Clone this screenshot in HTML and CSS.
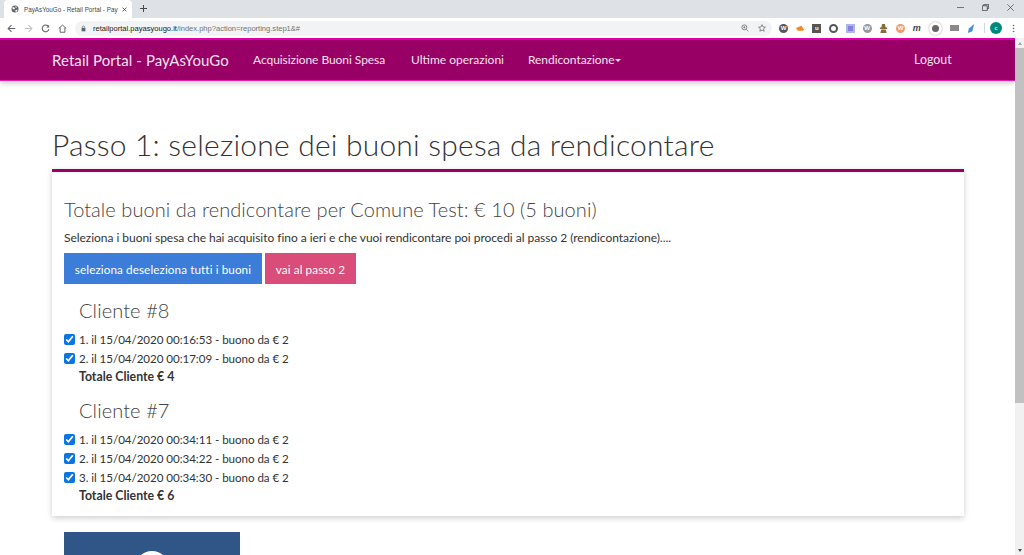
FILE: index.html
```html
<!DOCTYPE html>
<html lang="it">
<head>
<meta charset="utf-8">
<title>PayAsYouGo - Retail Portal</title>
<link rel="stylesheet" href="styles.css">
</head>
<body>
<div class="tabstrip">
  <div class="tab">
    <svg class="favicon" viewBox="0 0 16 16"><circle cx="8" cy="8" r="7" fill="#5f6368"/><path d="M3 4l4 1 1 3-3 1-2-2zM9 2l3 2-2 2-1-1zM9 10l4-1-1 4-3 1z" fill="#fff"/></svg>
    <span class="tab-title">PayAsYouGo - Retail Portal - Pay</span>
    <svg class="tab-close" viewBox="0 0 8 8"><path d="M1 1l6 6M7 1l-6 6" stroke="#3c4043" stroke-width="1.3"/></svg>
  </div>
  <svg class="new-tab" viewBox="0 0 9 9"><path d="M4.500 0v9M0 4.500h9" stroke="#45484c" stroke-width="1.300"/></svg>
  <div class="window-controls">
    <svg viewBox="0 0 10 10"><path d="M0 5h10" stroke="#444" stroke-width="1"/></svg>
    <svg viewBox="0 0 10 10"><path d="M2.500 2.500V.5h7v6h-2M.5 2.500h7v7h-7z" fill="none" stroke="#444" stroke-width="1.200"/></svg>
    <svg viewBox="0 0 10 10"><path d="M.5.5l9 9M9.500.5l-9 9" stroke="#444" stroke-width="1"/></svg>
  </div>
</div>
<div class="toolbar">
  <svg class="nav-icon" viewBox="0 0 12 12"><path d="M11 6H2M6 1.500L1.500 6 6 10.500" fill="none" stroke="#5f6368" stroke-width="1.400"/></svg>
  <svg class="nav-icon" viewBox="0 0 12 12"><path d="M1 6h9M6 1.500L10.500 6 6 10.500" fill="none" stroke="#bcbfc3" stroke-width="1.400"/></svg>
  <svg class="nav-icon" viewBox="0 0 12 12"><path d="M10 3.500A4.500 4.500 0 1 0 10.500 7" fill="none" stroke="#5f6368" stroke-width="1.400"/><path d="M10.800 1v3.500H7.300z" fill="#5f6368"/></svg>
  <svg class="nav-icon" viewBox="0 0 12 12"><path d="M1 6l5-4.500L11 6M2.800 5v6h6.400V5" fill="none" stroke="#5f6368" stroke-width="1.300"/></svg>
  <div class="omnibox">
    <svg class="lock" viewBox="0 0 8 10"><rect x="1" y="4" width="6" height="5.500" fill="#5f6368"/><path d="M2.200 4V2.800a1.800 1.800 0 0 1 3.600 0V4" fill="none" stroke="#5f6368"/></svg>
    <span class="url"><span class="url-host">retailportal.payasyougo.it</span>/index.php?action=reporting.step1&amp;#</span>
    <span class="omni-spacer"></span>
    <svg class="omni-icon" viewBox="0 0 12 12"><circle cx="5" cy="5" r="3.700" fill="none" stroke="#5f6368" stroke-width="1.100"/><path d="M7.800 7.800L11 11M3.300 5h3.400M5 3.300v3.400" stroke="#5f6368"/></svg>
    <svg class="omni-icon" viewBox="0 0 12 12"><path d="M6 1l1.500 3.400 3.600.4-2.700 2.400.8 3.600L6 9l-3.200 1.800.8-3.600L.9 4.800l3.600-.4z" fill="none" stroke="#5f6368" stroke-width="1.100"/></svg>
  </div>
  <div class="extensions">
    <span class="ext ext-wp">W</span>
    <svg class="ext-svg" viewBox="0 0 10 10"><path d="M0 4.500l6-2.500 3 4.500-1 1H2z" fill="#f28a1e"/></svg>
    <span class="ext ext-u">u</span>
    <span class="ext ext-ring"></span>
    <span class="ext ext-purple"></span>
    <span class="ext ext-wp ext-wp-light">W</span>
    <svg class="ext-svg" viewBox="0 0 10 10"><path d="M3.500 0h3l1 4H9v1.500H1V4h1.500zM2.500 6h5l1 4h-7z" fill="#8a6a3a"/></svg>
    <span class="ext ext-orange">W</span>
    <span class="ext ext-m">m</span>
    <span class="ext ext-active"><span class="ext-dot"></span></span>
    <span class="ext ext-gray"></span>
    <svg class="ext-svg" viewBox="0 0 10 10"><path d="M8 0L2 5 1 10l5-2z" fill="#4a90d9"/></svg>
  </div>
  <span class="tb-divider"></span>
  <span class="avatar">c</span>
  <svg class="menu-icon" viewBox="0 0 3 12"><circle cx="1.500" cy="2" r="1.100" fill="#5f6368"/><circle cx="1.500" cy="6" r="1.100" fill="#5f6368"/><circle cx="1.500" cy="10" r="1.100" fill="#5f6368"/></svg>
</div>
<div class="viewport">
  <div class="page">
    <nav class="navbar">
      <a class="brand">Retail Portal - PayAsYouGo</a>
      <a class="nav-link nl-1">Acquisizione Buoni Spesa</a>
      <a class="nav-link nl-2">Ultime operazioni</a>
      <a class="nav-link nl-3">Rendicontazione<span class="caret"></span></a>
      <a class="nav-link logout">Logout</a>
    </nav>
    <main class="container">
      <h1 class="page-title">Passo 1: selezione dei buoni spesa da rendicontare</h1>
      <section class="panel">
        <h3 class="panel-title">Totale buoni da rendicontare per Comune Test: € 10 (5 buoni)</h3>
        <p class="intro">Seleziona i buoni spesa che hai acquisito fino a ieri e che vuoi rendicontare poi procedi al passo 2 (rendicontazione)....</p>
        <div class="actions">
          <button class="btn btn-blue">seleziona deseleziona tutti i buoni</button>
          <button class="btn btn-pink">vai al passo 2</button>
        </div>
        <h3 class="client-title">Cliente #8</h3>
        <label class="voucher"><input type="checkbox" checked><span>1. il 15/04/2020 00:16:53 - buono da € 2</span></label>
        <label class="voucher"><input type="checkbox" checked><span>2. il 15/04/2020 00:17:09 - buono da € 2</span></label>
        <div class="client-total">Totale Cliente € 4</div>
        <h3 class="client-title">Cliente #7</h3>
        <label class="voucher"><input type="checkbox" checked><span>1. il 15/04/2020 00:34:11 - buono da € 2</span></label>
        <label class="voucher"><input type="checkbox" checked><span>2. il 15/04/2020 00:34:22 - buono da € 2</span></label>
        <label class="voucher"><input type="checkbox" checked><span>3. il 15/04/2020 00:34:30 - buono da € 2</span></label>
        <div class="client-total">Totale Cliente € 6</div>
      </section>
      <div class="picture"><span class="picture-circle"></span></div>
    </main>
  </div>
  <div class="scrollbar">
    <span class="sb-up"></span>
    <span class="sb-thumb"></span>
    <span class="sb-down"></span>
  </div>
</div>
</body>
</html>
```
FILE: styles.css
```css
* { box-sizing: border-box; }
html, body { margin: 0; height: 555px; overflow: hidden; background: #fff; }
body { display: flex; flex-direction: column; font-family: "Lato", "Open Sans", sans-serif; color: #333; }

.tabstrip { height: 18px; flex: none; background: #dee1e6; display: flex; align-items: flex-end; padding-left: 4px; }
.tab { width: 128px; height: 18px; background: #fff; border-radius: 4px 4px 0 0; display: flex; align-items: center; padding: 0 4px 0 7px; }
.favicon { width: 8px; height: 8px; flex: none; }
.tab-title { font: 6.300px "Liberation Sans", sans-serif; color: #45484c; margin-left: 5px; width: 92px; white-space: nowrap; }
.tab-close { width: 5px; height: 5px; margin-left: 6px; flex: none; }
.new-tab { width: 7px; height: 7px; margin: 0 0 6px 8px; }
.window-controls { margin-left: auto; display: flex; gap: 18px; align-self: flex-start; padding: 4px 10px 0 0; }
.window-controls svg { width: 7px; height: 7px; display: block; }

.toolbar { height: 20px; flex: none; background: #fff; display: flex; align-items: center; padding-left: 7px; }
.nav-icon { width: 9px; height: 9px; margin-right: 8px; flex: none; }
.omnibox { width: 697px; height: 15px; background: #f1f3f4; border-radius: 8px; display: flex; align-items: center; padding: 0 6px; flex: none; }
.lock { width: 5px; height: 7px; flex: none; }
.url { font: 7.550px "Liberation Sans", sans-serif; color: #6f7377; margin-left: 7px; white-space: nowrap; }
.url-host { color: #202124; }
.omni-spacer { flex: 1; }
.omni-icon { width: 8px; height: 8px; margin-left: 9px; }
.extensions { display: flex; align-items: center; width: 197px; margin-left: 7px; flex: none; justify-content: space-between; }
.ext, .ext-svg { width: 9px; height: 9px; flex: none; display: block; }
.ext-wp { background: #555; border-radius: 50%; color: #fff; font: bold 6px/9px "Liberation Sans", sans-serif; text-align: center; }
.ext-wp-light { background: #999; }
.ext-u { background: #555; color: #fff; font: bold 6px/9px "Liberation Sans", sans-serif; text-align: center; }
.ext-ring { border: 2px solid #555; border-radius: 50%; }
.ext-purple { background: #8a7fe0; box-shadow: inset 0 0 0 2px #a9b8ee; }
.ext-orange { background: #f19a6b; border-radius: 50%; color: #fff; font: bold 6px/9px "Liberation Sans", sans-serif; text-align: center; }
.ext-m { font: italic bold 9px/9px "Liberation Sans", sans-serif; color: #444; }
.ext-active { width: 13px; height: 13px; border-radius: 50%; background: #fff; box-shadow: 0 0 2px #999; display: flex; align-items: center; justify-content: center; }
.ext-dot { width: 7px; height: 7px; background: #666; border-radius: 50%; }
.ext-gray { background: #8a8a8a; height: 6px; }
.tb-divider { width: 1px; height: 10px; background: #d5d7da; margin-left: 8px; flex: none; }
.avatar { width: 12px; height: 12px; margin-left: 5px; border-radius: 50%; background: #00897b; color: #fff; font: 6px/12px "Liberation Sans", sans-serif; text-align: center; flex: none; }
.menu-icon { width: 3px; height: 9px; margin-left: 10px; flex: none; }

.viewport { flex: 1; min-height: 0; display: flex; overflow: hidden; }
.page { flex: 1; min-width: 0; overflow: hidden; }

.navbar { height: 43px; background: #990066; border-top: 2px solid #e000b0; border-bottom: 1px solid #e020a8; box-shadow: 0 2px 5px rgba(0,0,0,.22); display: flex; align-items: center; color: #f3e2ec; padding: 0 0 1px 52px; }
.brand { font-size: 15px; letter-spacing: .07px; width: 201px; white-space: nowrap; }
.nav-link { font-size: 12px; white-space: nowrap; }
.nl-1 { width: 158px; letter-spacing: -.06px; }
.nl-2 { width: 117px; letter-spacing: 0; }
.nl-3 { width: 386px; letter-spacing: -.05px; }
.caret { display: inline-block; border-top: 3px solid #f3e2ec; border-left: 3px solid transparent; border-right: 3px solid transparent; margin-left: 1px; vertical-align: 2px; }
.logout { letter-spacing: 0; font-size: 12.400px; }

.container { padding: 0 51px 0 52px; }
.page-title { margin: 48px 0 0; height: 40px; font-weight: 300; font-size: 30px; line-height: 30px; color: #333; letter-spacing: .21px; }
.panel { height: 347px; background: #fff; border-top: 3px solid #990066; box-shadow: 0 2px 6px rgba(0,0,0,.2); padding: 25px 12px 0; }
.panel-title { margin: 0; font-weight: 300; font-size: 20px; line-height: 24px; color: #444; letter-spacing: .065px; }
.intro { margin: 9px 0 0; font-size: 12px; line-height: 15px; color: #333; letter-spacing: -.035px; }
.actions { display: flex; gap: 3px; margin-top: 8px; }
.btn { height: 31px; border: 0; padding: 0; color: #fff; font: 11.700px "Lato", sans-serif; letter-spacing: .1px; }
.btn-blue { width: 198px; background: #3b7dd8; }
.btn-pink { width: 91px; background: #da4d7a; }
.client-title { margin: 14px 0 8px 15px; font-weight: 300; font-size: 20px; line-height: 24px; color: #444; letter-spacing: .1px; }
.voucher { display: flex; align-items: center; height: 19px; font-size: 11.600px; letter-spacing: -.05px; }
.voucher input { width: 11px; height: 11px; margin: 0 4px 0 0; accent-color: #0b74e5; flex: none; }
.client-total { margin-left: 15px; height: 16px; line-height: 17px; font-size: 12.300px; font-weight: 700; letter-spacing: 0; }
.picture { width: 176px; height: 23px; margin: 16px 0 0 12px; background: #2f5687; overflow: hidden; display: flex; justify-content: center; }
.picture-circle { width: 34px; height: 34px; margin-top: 19px; border-radius: 50%; background: #fff; flex: none; }

.scrollbar { width: 9px; flex: none; background: #f1f1f1; display: flex; flex-direction: column; align-items: stretch; }
.sb-up, .sb-down { height: 10px; flex: none; }
.sb-up::after, .sb-down::after { content: ""; display: block; margin: 4px auto 0; width: 0; border-left: 2.500px solid transparent; border-right: 2.500px solid transparent; }
.sb-up::after { border-bottom: 3px solid #a3a3a3; }
.sb-down::after { border-top: 3px solid #505050; }
.sb-thumb { height: 355px; background: #c1c1c1; margin-bottom: auto; }
```
